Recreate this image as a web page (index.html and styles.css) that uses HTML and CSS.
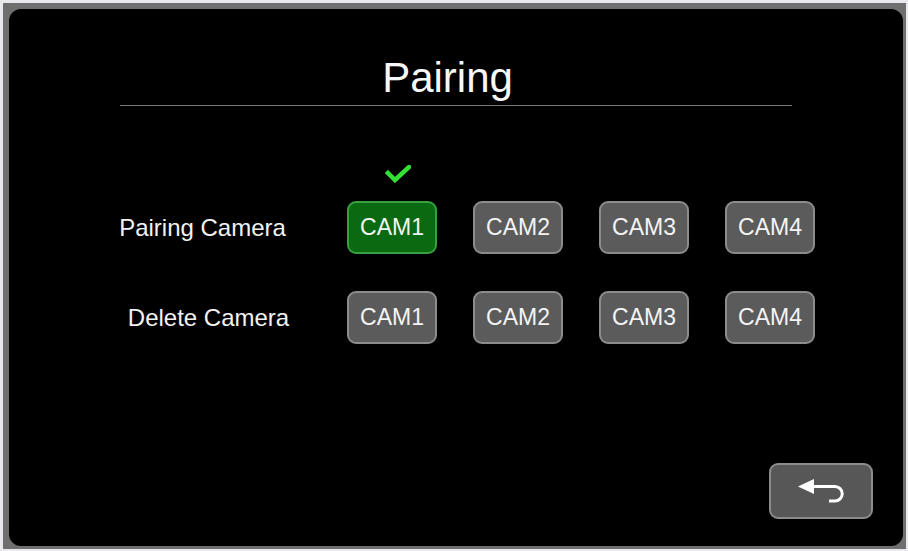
FILE: index.html
```
<!DOCTYPE html>
<html>
<head>
<meta charset="utf-8">
<link rel="stylesheet" href="styles.css">
</head>
<body>
<div class="frame">
  <div class="panel">
    <header class="header">
      <h1 class="title">Pairing</h1>
    </header>
    <div class="rows">
      <div class="row row-check">
        <div class="label"></div>
        <div class="cell check-cell">
          <svg class="check" width="26" height="18" viewBox="0 0 26 18"><polyline points="3,8 10,15 24,2" fill="none" stroke="#34e034" stroke-width="4.5" stroke-linecap="square" stroke-linejoin="miter"/></svg>
        </div>
      </div>
      <div class="row row-pair">
        <div class="label">Pairing Camera</div>
        <button class="cam cam-active">CAM1</button>
        <button class="cam">CAM2</button>
        <button class="cam">CAM3</button>
        <button class="cam">CAM4</button>
      </div>
      <div class="row row-delete">
        <div class="label label-delete">Delete Camera</div>
        <button class="cam">CAM1</button>
        <button class="cam">CAM2</button>
        <button class="cam">CAM3</button>
        <button class="cam">CAM4</button>
      </div>
    </div>
    <footer class="footer">
      <button class="back">
        <svg width="52" height="26" viewBox="0 0 52 26"><polygon points="3,8.5 19,1 19,16" fill="#fff"/><path d="M18 8.5 H40 A7.25 7.25 0 0 1 40 23 H34" fill="none" stroke="#fff" stroke-width="3"/></svg>
      </button>
    </footer>
  </div>
</div>
</body>
</html>
```
FILE: styles.css
```
* { box-sizing: border-box; }
html, body { margin: 0; padding: 0; }
body {
  width: 908px;
  height: 551px;
  background: #e9e9ed;
  font-family: "Liberation Sans", Arial, sans-serif;
  overflow: hidden;
}
.frame {
  margin: 3px 0 0 3px;
  width: 903px;
  height: 546px;
  background: #6f6f6f;
  padding: 6px 3px 3px 6px;
}
.panel {
  width: 894px;
  height: 537px;
  background: #000;
  border-radius: 12px;
  display: flex;
  flex-direction: column;
  color: #f2f2f2;
}
.header {
  width: 672px;
  margin: 0 auto;
  padding-top: 45px;
  border-bottom: 1px solid #7c7c7c;
  padding-bottom: 3px;
}
.title {
  margin: 0;
  font-weight: normal;
  font-size: 42px;
  line-height: 48px;
  text-align: center;
  padding-right: 17px;
  color: #f7f7f7;
}
.rows {
  padding-left: 91px;
  display: flex;
  flex-direction: column;
}
.row {
  display: grid;
  grid-template-columns: 211px 90px 90px 90px 90px;
  column-gap: 36px;
  align-items: center;
}
.row-check { margin-top: 59px; height: 18px; }
.row-pair { margin-top: 18px; }
.row-delete { margin-top: 37px; }
.label {
  grid-column: 1;
  font-size: 24px;
  text-align: center;
  padding-right: 6px;
  white-space: nowrap;
}
.label-delete { padding-right: 0; padding-left: 6px; }
.check-cell {
  display: flex;
  padding-left: 38px;
}
.check { display: block; }
.cam {
  width: 90px;
  height: 53px;
  border-radius: 9px;
  background: #5b5b5b;
  border: 2px solid #8c8c8c;
  color: #f4f4f4;
  font-family: "Liberation Sans", Arial, sans-serif;
  font-size: 23px;
  padding: 0;
  display: flex;
  align-items: center;
  justify-content: center;
}
.cam-active {
  background: #0a6a12;
  border-color: #35a23f;
}
.footer {
  margin-top: auto;
  display: flex;
  justify-content: flex-end;
  padding-right: 30px;
  padding-bottom: 27px;
}
.back {
  width: 104px;
  height: 56px;
  border-radius: 9px;
  background: #575757;
  border: 2px solid #8c8c8c;
  padding: 0;
  display: flex;
  align-items: center;
  justify-content: center;
}
.back svg { display: block; }
```
